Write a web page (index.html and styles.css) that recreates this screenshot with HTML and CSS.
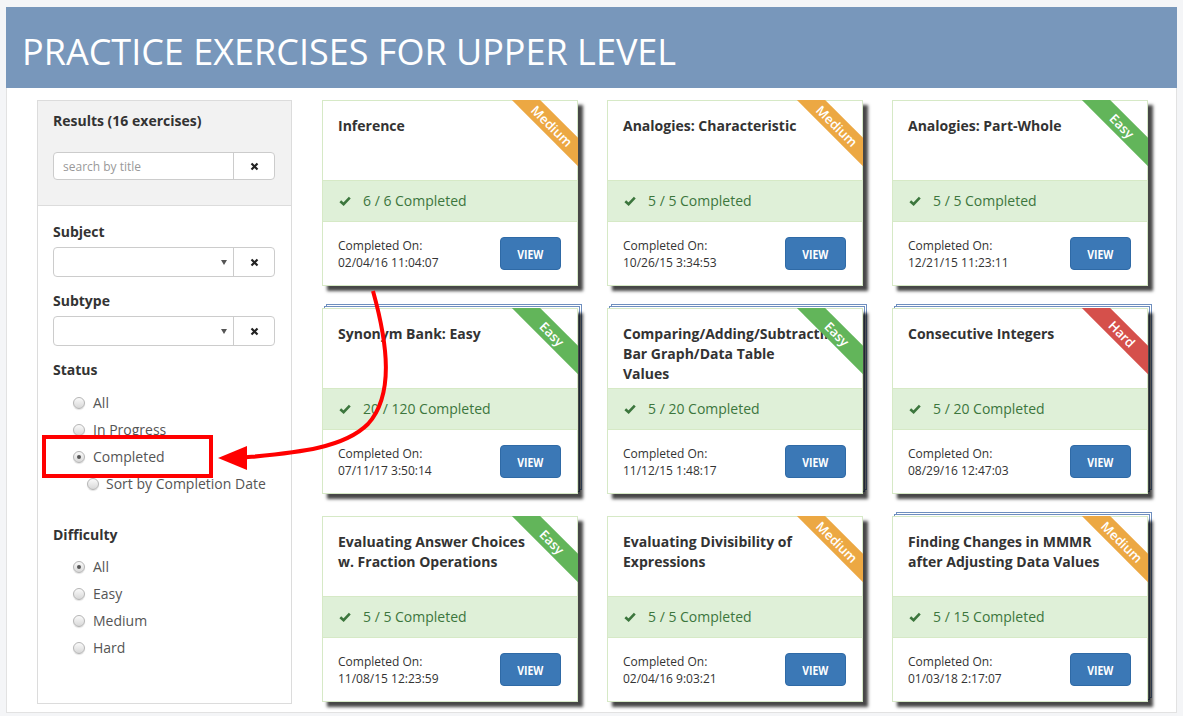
FILE: index.html
```html
<!DOCTYPE html>
<html>
<head>
<meta charset="utf-8">
<link rel="stylesheet" href="styles.css">
</head>
<body>
<div class="page">
  <header class="header"><h1>PRACTICE EXERCISES FOR UPPER LEVEL</h1></header>
  <div class="main">
    <aside class="sidebar">
      <div class="side-top">
        <div class="side-title">Results (16 exercises)</div>
        <div class="combo">
          <div class="combo-field placeholder">search by title</div>
          <div class="combo-btn"><svg width="9" height="9" viewBox="0 0 9 9"><path d="M1.5 1.5L7.5 7.5M7.5 1.5L1.5 7.5" stroke="#222" stroke-width="2.2"/></svg></div>
        </div>
      </div>
      <div class="side-body">
        <div class="label">Subject</div>
        <div class="combo select">
          <div class="combo-field"><span class="caret"></span></div>
          <div class="combo-btn"><svg width="9" height="9" viewBox="0 0 9 9"><path d="M1.5 1.5L7.5 7.5M7.5 1.5L1.5 7.5" stroke="#222" stroke-width="2.2"/></svg></div>
        </div>
        <div class="label gap">Subtype</div>
        <div class="combo select">
          <div class="combo-field"><span class="caret"></span></div>
          <div class="combo-btn"><svg width="9" height="9" viewBox="0 0 9 9"><path d="M1.5 1.5L7.5 7.5M7.5 1.5L1.5 7.5" stroke="#222" stroke-width="2.2"/></svg></div>
        </div>
        <div class="label gap">Status</div>
        <div class="radios">
          <div class="radio"><span class="dot"></span>All</div>
          <div class="radio"><span class="dot"></span>In Progress</div>
          <div class="radio"><span class="dot on"></span>Completed</div>
          <div class="radio sub"><span class="dot"></span>Sort by Completion Date</div>
        </div>
        <div class="label gap2">Difficulty</div>
        <div class="radios">
          <div class="radio"><span class="dot on"></span>All</div>
          <div class="radio"><span class="dot"></span>Easy</div>
          <div class="radio"><span class="dot"></span>Medium</div>
          <div class="radio"><span class="dot"></span>Hard</div>
        </div>
      </div>
    </aside>

    <section class="grid">
      <div class="cell">
        <div class="card">
          <div class="ribbon-clip"><div class="ribbon medium">Medium</div></div>
          <div class="c-title">Inference</div>
          <div class="c-band"><svg class="check" width="12" height="10" viewBox="0 0 12 10"><path d="M1.3 5.2L4.6 8.2L10.8 1.6" fill="none" stroke="#3c763d" stroke-width="2.6"/></svg>6 / 6 Completed</div>
          <div class="c-foot"><div class="c-date">Completed On:<br>02/04/16 11:04:07</div><div class="btn"><span>VIEW</span></div></div>
        </div>
      </div>
      <div class="cell">
        <div class="card">
          <div class="ribbon-clip"><div class="ribbon medium">Medium</div></div>
          <div class="c-title">Analogies: Characteristic</div>
          <div class="c-band"><svg class="check" width="12" height="10" viewBox="0 0 12 10"><path d="M1.3 5.2L4.6 8.2L10.8 1.6" fill="none" stroke="#3c763d" stroke-width="2.6"/></svg>5 / 5 Completed</div>
          <div class="c-foot"><div class="c-date">Completed On:<br>10/26/15 3:34:53</div><div class="btn"><span>VIEW</span></div></div>
        </div>
      </div>
      <div class="cell">
        <div class="card">
          <div class="ribbon-clip"><div class="ribbon easy">Easy</div></div>
          <div class="c-title">Analogies: Part-Whole</div>
          <div class="c-band"><svg class="check" width="12" height="10" viewBox="0 0 12 10"><path d="M1.3 5.2L4.6 8.2L10.8 1.6" fill="none" stroke="#3c763d" stroke-width="2.6"/></svg>5 / 5 Completed</div>
          <div class="c-foot"><div class="c-date">Completed On:<br>12/21/15 11:23:11</div><div class="btn"><span>VIEW</span></div></div>
        </div>
      </div>

      <div class="cell">
        <div class="sheet s2"></div><div class="sheet s1"></div>
        <div class="card">
          <div class="ribbon-clip"><div class="ribbon easy">Easy</div></div>
          <div class="c-title">Synonym Bank: Easy</div>
          <div class="c-band"><svg class="check" width="12" height="10" viewBox="0 0 12 10"><path d="M1.3 5.2L4.6 8.2L10.8 1.6" fill="none" stroke="#3c763d" stroke-width="2.6"/></svg>20 / 120 Completed</div>
          <div class="c-foot"><div class="c-date">Completed On:<br>07/11/17 3:50:14</div><div class="btn"><span>VIEW</span></div></div>
        </div>
      </div>
      <div class="cell">
        <div class="sheet s2"></div><div class="sheet s1"></div>
        <div class="card">
          <div class="ribbon-clip"><div class="ribbon easy">Easy</div></div>
          <div class="c-title">Comparing/Adding/Subtracting Bar Graph/Data Table Values</div>
          <div class="c-band"><svg class="check" width="12" height="10" viewBox="0 0 12 10"><path d="M1.3 5.2L4.6 8.2L10.8 1.6" fill="none" stroke="#3c763d" stroke-width="2.6"/></svg>5 / 20 Completed</div>
          <div class="c-foot"><div class="c-date">Completed On:<br>11/12/15 1:48:17</div><div class="btn"><span>VIEW</span></div></div>
        </div>
      </div>
      <div class="cell">
        <div class="sheet s2"></div><div class="sheet s1"></div>
        <div class="card">
          <div class="ribbon-clip"><div class="ribbon hard">Hard</div></div>
          <div class="c-title">Consecutive Integers</div>
          <div class="c-band"><svg class="check" width="12" height="10" viewBox="0 0 12 10"><path d="M1.3 5.2L4.6 8.2L10.8 1.6" fill="none" stroke="#3c763d" stroke-width="2.6"/></svg>5 / 20 Completed</div>
          <div class="c-foot"><div class="c-date">Completed On:<br>08/29/16 12:47:03</div><div class="btn"><span>VIEW</span></div></div>
        </div>
      </div>

      <div class="cell">
        <div class="card">
          <div class="ribbon-clip"><div class="ribbon easy">Easy</div></div>
          <div class="c-title">Evaluating Answer Choices w. Fraction Operations</div>
          <div class="c-band"><svg class="check" width="12" height="10" viewBox="0 0 12 10"><path d="M1.3 5.2L4.6 8.2L10.8 1.6" fill="none" stroke="#3c763d" stroke-width="2.6"/></svg>5 / 5 Completed</div>
          <div class="c-foot"><div class="c-date">Completed On:<br>11/08/15 12:23:59</div><div class="btn"><span>VIEW</span></div></div>
        </div>
      </div>
      <div class="cell">
        <div class="card">
          <div class="ribbon-clip"><div class="ribbon medium">Medium</div></div>
          <div class="c-title">Evaluating Divisibility of Expressions</div>
          <div class="c-band"><svg class="check" width="12" height="10" viewBox="0 0 12 10"><path d="M1.3 5.2L4.6 8.2L10.8 1.6" fill="none" stroke="#3c763d" stroke-width="2.6"/></svg>5 / 5 Completed</div>
          <div class="c-foot"><div class="c-date">Completed On:<br>02/04/16 9:03:21</div><div class="btn"><span>VIEW</span></div></div>
        </div>
      </div>
      <div class="cell">
        <div class="sheet s2"></div><div class="sheet s1"></div>
        <div class="card">
          <div class="ribbon-clip"><div class="ribbon medium">Medium</div></div>
          <div class="c-title">Finding Changes in MMMR after Adjusting Data Values</div>
          <div class="c-band"><svg class="check" width="12" height="10" viewBox="0 0 12 10"><path d="M1.3 5.2L4.6 8.2L10.8 1.6" fill="none" stroke="#3c763d" stroke-width="2.6"/></svg>5 / 15 Completed</div>
          <div class="c-foot"><div class="c-date">Completed On:<br>01/03/18 2:17:07</div><div class="btn"><span>VIEW</span></div></div>
        </div>
      </div>
    </section>
  </div>
</div>

<svg class="annotation" width="1183" height="716" viewBox="0 0 1183 716">
  <rect x="44" y="437" width="167" height="39" fill="none" stroke="#f00" stroke-width="4"/>
  <path d="M373 291 C 388 345 394 395 368 424 C 342 450 290 453 240 458" fill="none" stroke="#f00" stroke-width="4"/>
  <path d="M218 458 L247 446 L247 470 Z" fill="#f00"/>
</svg>
</body>
</html>
```

FILE: styles.css
```css
html, body {
  margin: 0;
  padding: 0;
  overflow: hidden;
}
body {
  background: #f4f5f7;
  font-family: "Open Sans", "DejaVu Sans", sans-serif;
  color: #333;
  position: relative;
}
.page {
  margin: 7px 6px 0 6px;
}
.header {
  background: #7897bb;
  height: 81px;
  padding: 8px 0 0 16px;
  box-sizing: border-box;
}
.header h1 {
  margin: 0;
  color: #fff;
  font-weight: 400;
  font-size: 36px;
  line-height: 73px;
  letter-spacing: 0;
}
.main {
  background: #fff;
  border: 1px solid #e2e2e2;
  border-top: none;
  display: flex;
  align-items: flex-start;
  gap: 30px;
  padding: 12px 0 8px 30px;
}
.sidebar {
  width: 255px;
  height: 604px;
  box-sizing: border-box;
  border: 1px solid #dcdcdc;
  flex: none;
}
.side-top {
  background: #f2f2f2;
  border-bottom: 1px solid #dcdcdc;
  padding: 10px 16px 25px 15px;
}
.side-title {
  font-size: 14px;
  font-weight: 700;
  line-height: 20px;
  color: #333;
  margin-bottom: 21px;
}
.combo {
  display: flex;
  height: 28px;
  border: 1px solid #ccc;
  border-radius: 4px;
  background: #fff;
  box-sizing: border-box;
}
.combo.select {
  height: 30px;
}
.combo-field {
  flex: 1;
  display: flex;
  align-items: center;
  padding-left: 9px;
  font-size: 12px;
  position: relative;
}
.placeholder {
  color: #999;
}
.combo-btn {
  width: 40px;
  border-left: 1px solid #ccc;
  display: flex;
  align-items: center;
  justify-content: center;
}
.caret {
  position: absolute;
  right: 6px;
  top: 50%;
  margin-top: -2px;
  border-left: 3px solid transparent;
  border-right: 3px solid transparent;
  border-top: 5px solid #555;
}
.side-body {
  padding: 16px 16px 0 15px;
}
.label {
  font-size: 14px;
  font-weight: 700;
  line-height: 20px;
  color: #333;
  margin-bottom: 5px;
}
.label.gap {
  margin-top: 14px;
}
.label.gap2 {
  margin-top: 28px;
  margin-bottom: 8px;
}
.label.gap + .radios {
  margin-top: 9px;
}
.radio {
  height: 27px;
  display: flex;
  align-items: center;
  padding-left: 20px;
  gap: 8px;
  font-size: 14px;
  color: #555;
}
.radio.sub {
  padding-left: 34px;
  gap: 7px;
}
.dot {
  width: 12px;
  height: 12px;
  box-sizing: border-box;
  border-radius: 50%;
  border: 1px solid #b5b5b5;
  background: linear-gradient(#fafafa, #d8d8d8);
  box-shadow: 0 1px 1px rgba(0,0,0,0.12);
  position: relative;
  flex: none;
}
.dot.on::after {
  content: "";
  position: absolute;
  left: 3px;
  top: 3px;
  width: 4px;
  height: 4px;
  border-radius: 50%;
  background: #555;
}
.grid {
  display: grid;
  grid-template-columns: repeat(3, 256px);
  column-gap: 29px;
  row-gap: 22px;
}
.cell {
  position: relative;
  height: 186px;
}
.sheet {
  position: absolute;
  inset: 0;
  background: #fff;
  border: 1px solid #6f8fbf;
}
.sheet.s1 {
  transform: translate(2px, -2px);
}
.sheet.s2 {
  transform: translate(4px, -4px);
}
.card {
  position: relative;
  height: 186px;
  box-sizing: border-box;
  background: #fff;
  border: 1px solid #d6e9c6;
  box-shadow: 5px 5px 3px rgba(0,0,0,0.72);
  display: flex;
  flex-direction: column;
}
.ribbon-clip {
  position: absolute;
  top: -1px;
  right: -1px;
  width: 80px;
  height: 80px;
  overflow: hidden;
  z-index: 2;
}
.ribbon {
  position: absolute;
  left: -1px;
  top: 16px;
  width: 110px;
  height: 20px;
  line-height: 20px;
  text-align: center;
  color: #fff;
  font-size: 13px;
  font-weight: 600;
  transform: rotate(45deg);
}
.ribbon.medium { background: #eca843; }
.ribbon.easy { background: #62b55a; }
.ribbon.hard { background: #d5504b; }
.c-title {
  height: 79px;
  box-sizing: border-box;
  padding: 15px 46px 0 15px;
  font-size: 14px;
  font-weight: 700;
  line-height: 20px;
  color: #333;
}
.c-band {
  height: 42px;
  box-sizing: border-box;
  background: #dff0d8;
  border-top: 1px solid #d6e9c6;
  border-bottom: 1px solid #d6e9c6;
  display: flex;
  align-items: center;
  padding-left: 16px;
  padding-bottom: 1px;
  font-size: 14px;
  color: #3c763d;
}
.check {
  margin-right: 12px;
}
.c-foot {
  flex: 1;
  display: flex;
  justify-content: space-between;
  align-items: flex-start;
  padding: 15px 16px 0 15px;
}
.c-date {
  font-size: 12px;
  line-height: 17px;
  color: #333;
}
.btn {
  width: 61px;
  height: 33px;
  box-sizing: border-box;
  margin-top: 0;
  background: #3b78b6;
  border: 1px solid #2f6aa6;
  border-radius: 4px;
  display: flex;
  align-items: center;
  justify-content: center;
  color: #fff;
  font-size: 13px;
  font-weight: 700;
}
.btn span {
  display: inline-block;
  transform: scaleX(0.8);
}
.annotation {
  position: absolute;
  left: 0;
  top: 0;
  pointer-events: none;
}
```
